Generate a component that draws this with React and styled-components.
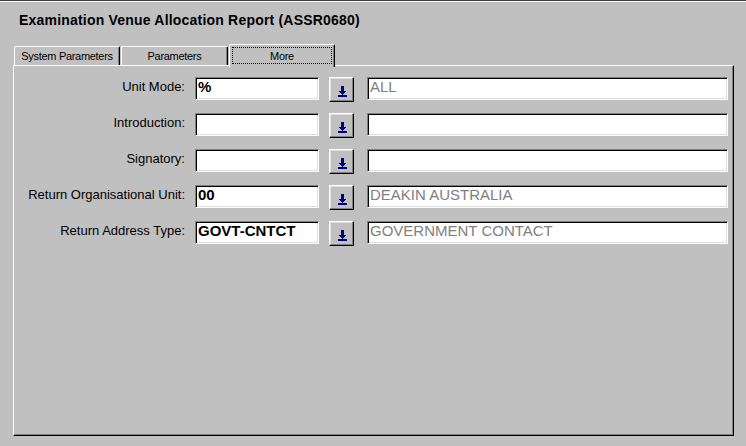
import React from 'react';
import styled, { createGlobalStyle } from 'styled-components';

const GlobalStyle = createGlobalStyle`
  html, body {
    margin: 0;
    padding: 0;
    background: #c0c0c0;
  }
  * { box-sizing: border-box; }
`

const Window = styled.div`
  width: 746px;
  height: 446px;
  background: #c0c0c0;
  border-top: 1px solid #404040;
  box-shadow: inset 0 1px 0 #ffffff;
  font-family: "Liberation Sans", Arial, sans-serif;
  color: #000;
  overflow: hidden;
`

const Title = styled.h1`
  margin: 0;
  padding: 11px 0 0 19px;
  height: 43px;
  font-size: 14px;
  line-height: 16px;
  letter-spacing: 0.2px;
  font-weight: bold;
`

const TabRow = styled.div`
  display: flex;
  align-items: flex-end;
  gap: 1px;
  height: 21px;
  margin-left: 14px;
  position: relative;
  z-index: 1;
`

const Tab = styled.div`
  width: ${props => props.width}px;
  height: ${props => props.active ? 23 : 19}px;
  margin-bottom: ${props => props.active ? -2 : 0}px;
  background: #c0c0c0;
  border-top: 1px solid #ffffff;
  border-left: 1px solid #ffffff;
  border-right: 1px solid #000000;
  box-shadow: inset -1px 0 0 #808080;
  border-radius: 2px 2px 0 0;
  display: flex;
  align-items: ${props => props.active ? 'flex-start' : 'center'};
  justify-content: center;
  padding-top: ${props => props.active ? 2 : 0}px;
  font-size: 11px;
  letter-spacing: -0.3px;
`

const FocusLabel = styled.span`
  display: flex;
  align-items: center;
  justify-content: center;
  width: 100px;
  height: 17px;
  border: 1px dotted #000;
`

const Panel = styled.div`
  margin-left: 13px;
  width: 721px;
  height: 371px;
  border-top: 1px solid #ffffff;
  border-left: 1px solid #ffffff;
  border-right: 1px solid #000000;
  border-bottom: 1px solid #000000;
  box-shadow: inset -1px -1px 0 #808080;
  padding-top: 11px;
`

const Form = styled.div`
  display: grid;
  grid-template-columns: 171px 124px 25px 364px;
  column-gap: 10px;
  row-gap: 11px;
  grid-auto-rows: 25px;
  align-items: start;
`

const Label = styled.label`
  text-align: right;
  font-size: 13px;
  line-height: 15px;
  padding-top: 2px;
  white-space: nowrap;
`

const Field = styled.div`
  height: 23px;
  margin-left: ${props => props.offset || 0}px;
  background: #ffffff;
  border-top: 1px solid #808080;
  border-left: 1px solid #808080;
  border-right: 1px solid #ffffff;
  border-bottom: 1px solid #ffffff;
  box-shadow: inset 1px 1px 0 #000000, inset -1px -1px 0 #dfdfdf;
  padding: 1px 0 0 2px;
  font-size: 15px;
  line-height: 16px;
  font-weight: ${props => props.bold ? 'bold' : 'normal'};
  color: ${props => props.muted ? '#808080' : '#000000'};
  white-space: nowrap;
  overflow: hidden;
`

const LovButton = styled.div`
  width: 25px;
  height: 25px;
  background: #c0c0c0;
  border-top: 1px solid #ffffff;
  border-left: 1px solid #ffffff;
  border-right: 1px solid #000000;
  border-bottom: 1px solid #000000;
  box-shadow: inset -1px -1px 0 #808080, inset 1px 1px 0 #dfdfdf;
  display: flex;
  align-items: center;
  justify-content: center;
  padding: 3px 0 0 2px;
`

const DownArrow = () => (
  <svg width="9" height="11" viewBox="0 0 9 11" shapeRendering="crispEdges">
    <rect x="3" y="0" width="3" height="5" fill="#000080" />
    <polygon points="0.5,5 8.5,5 4.5,9" fill="#000080" />
    <rect x="0" y="9" width="9" height="2" fill="#000080" />
  </svg>
)

const rows = [
  { label: 'Unit Mode:', code: '%', desc: 'ALL' },
  { label: 'Introduction:', code: '', desc: '' },
  { label: 'Signatory:', code: '', desc: '' },
  { label: 'Return Organisational Unit:', code: '00', desc: 'DEAKIN AUSTRALIA' },
  { label: 'Return Address Type:', code: 'GOVT-CNTCT', desc: 'GOVERNMENT CONTACT' },
]

export default function App() {
  return (
    <Window>
      <GlobalStyle />
      <Title>Examination Venue Allocation Report (ASSR0680)</Title>
      <TabRow>
        <Tab width={106}>System Parameters</Tab>
        <Tab width={107}>Parameters</Tab>
        <Tab width={106} active>
          <FocusLabel>More</FocusLabel>
        </Tab>
      </TabRow>
      <Panel>
        <Form>
          {rows.map(r => (
            <React.Fragment key={r.label}>
              <Label>{r.label}</Label>
              <Field bold>{r.code}</Field>
              <LovButton><DownArrow /></LovButton>
              <Field muted offset={3}>{r.desc}</Field>
            </React.Fragment>
          ))}
        </Form>
      </Panel>
    </Window>
  );
}
